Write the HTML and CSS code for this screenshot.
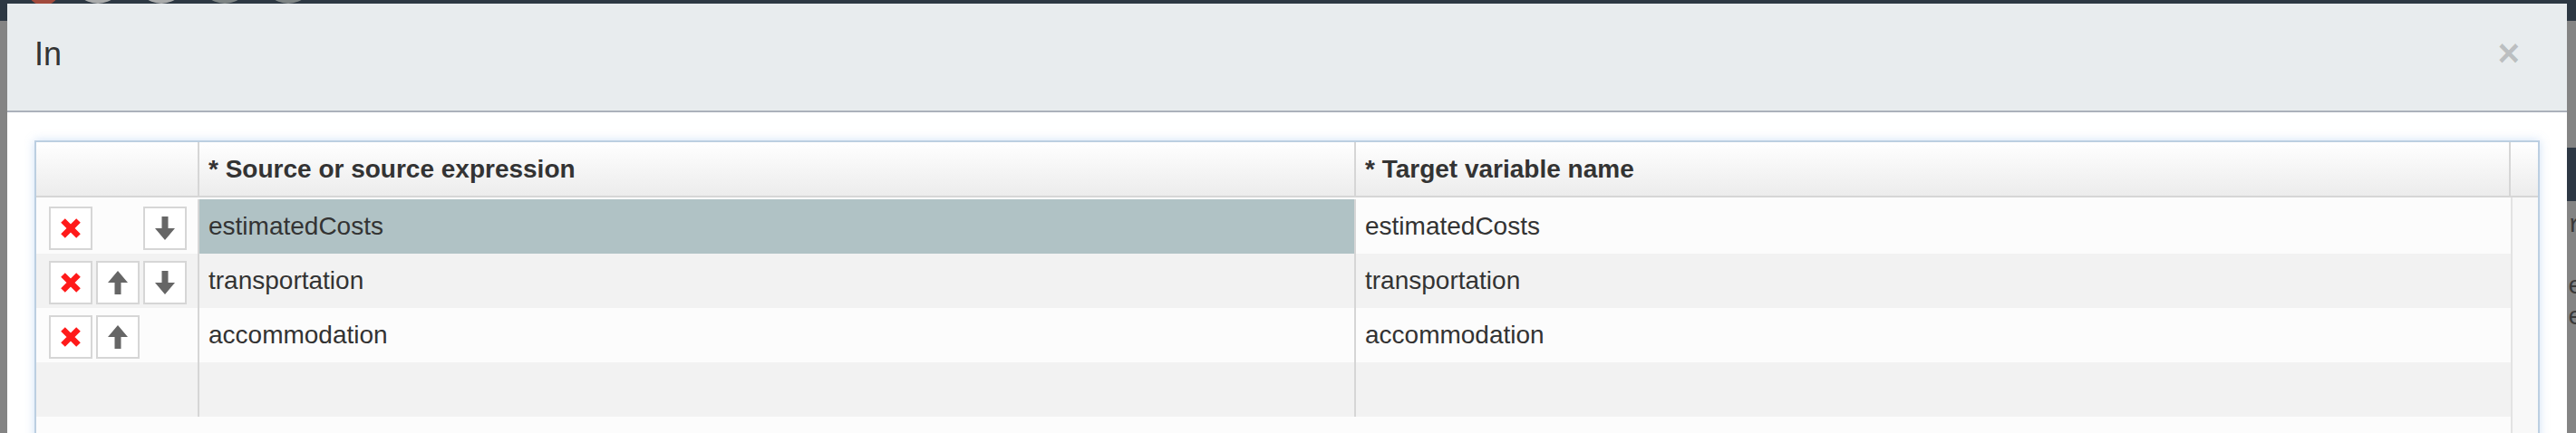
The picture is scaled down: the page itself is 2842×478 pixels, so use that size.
FILE: index.html
```html
<!DOCTYPE html>
<html lang="en">
<head>
  <meta charset="UTF-8" />
  <title>In – data mapping</title>
  <link rel="stylesheet" href="styles.css">
</head>
<body>
<!-- page behind the dialog -->
<div class="page">
  <div class="navbar">
    <span class="nav-logo"></span>
    <span class="nav-dot"></span>
    <span class="nav-dot"></span>
    <span class="nav-dot dark"></span>
    <span class="nav-dot dark"></span>
  </div>
  <div class="side-bar"></div>
  <div class="side-text">r<br><br>e<br>e</div>
</div>

<!-- dialog -->
<div class="modal">
  <div class="modal-header">
    <h3 class="modal-title">In</h3>
    <button class="close">×</button>
  </div>
  <div class="modal-body">
    <div class="grid">
      <div class="grid-head">
        <div class="cell col-actions"></div>
        <div class="cell col-source">* Source or source expression</div>
        <div class="cell col-target">* Target variable name</div>
        <div class="cell col-scroll"></div>
      </div>
      <div class="grid-body">
        <div class="rows">
          <div class="row">
            <div class="cell col-actions">
              <button class="btn-icon"><svg class="ic-del" viewBox="0 0 22 22"><path d="M2.5 2.5 19.5 19.5M19.5 2.5 2.5 19.5"/></svg></button>
              <span class="btn-slot"></span>
              <button class="btn-icon"><svg class="ic-arrow" viewBox="0 0 22 26"><path d="M7.5 0h7v13h7.5L11 26 0 13h7.5z"/></svg></button>
            </div>
            <div class="cell col-source selected">estimatedCosts</div>
            <div class="cell col-target">estimatedCosts</div>
          </div>
          <div class="row">
            <div class="cell col-actions">
              <button class="btn-icon"><svg class="ic-del" viewBox="0 0 22 22"><path d="M2.5 2.5 19.5 19.5M19.5 2.5 2.5 19.5"/></svg></button>
              <button class="btn-icon"><svg class="ic-arrow" viewBox="0 0 22 26"><path d="M7.5 26h7V13h7.5L11 0 0 13h7.5z"/></svg></button>
              <button class="btn-icon"><svg class="ic-arrow" viewBox="0 0 22 26"><path d="M7.5 0h7v13h7.5L11 26 0 13h7.5z"/></svg></button>
            </div>
            <div class="cell col-source">transportation</div>
            <div class="cell col-target">transportation</div>
          </div>
          <div class="row">
            <div class="cell col-actions">
              <button class="btn-icon"><svg class="ic-del" viewBox="0 0 22 22"><path d="M2.5 2.5 19.5 19.5M19.5 2.5 2.5 19.5"/></svg></button>
              <button class="btn-icon"><svg class="ic-arrow" viewBox="0 0 22 26"><path d="M7.5 26h7V13h7.5L11 0 0 13h7.5z"/></svg></button>
            </div>
            <div class="cell col-source">accommodation</div>
            <div class="cell col-target">accommodation</div>
          </div>
          <div class="row">
            <div class="cell col-actions"></div>
            <div class="cell col-source"></div>
            <div class="cell col-target"></div>
          </div>
        </div>
        <div class="scroll-track"></div>
      </div>
    </div>
  </div>
</div>
</body>
</html>
```

FILE: styles.css
```css
*{box-sizing:border-box}
html,body{height:100%}
body{margin:0;background:#848484;font-family:"Liberation Sans",Arial,Helvetica,sans-serif;color:#333;overflow:hidden}

/* page behind the backdrop */
.page{position:relative;height:100%}
.navbar{height:23px;background:#2d3843;display:flex;align-items:flex-start;gap:14px;padding-left:30px}
.nav-logo{width:36px;height:36px;border-radius:50%;background:#a14a3c;margin-top:-30px}
.nav-dot{width:56px;height:56px;border-radius:50%;background:#a9abab;margin-top:-52px}
.nav-dot.dark{background:#7d8484}
.side-bar{position:absolute;top:163px;right:0;width:12px;height:59px;background:#2e3844}
.side-text{position:absolute;top:232px;left:2833px;font:28px/34px "Liberation Mono",monospace;color:#3a3a3a}

/* dialog */
.modal{position:absolute;top:4px;left:8px;right:10px;bottom:0;background:#fff}
.modal-header{display:flex;justify-content:space-between;align-items:flex-start;height:120px;padding:36px 30px 0 30px;background:#e8ecee;border-bottom:2px solid #abb1bb}
.modal-title{margin:0;font-size:36px;line-height:40px;font-weight:normal;color:#333}
.close{margin:-2px 22px 0 0;padding:0;border:0;background:none;font:bold 42px/1 "Liberation Sans",Arial,sans-serif;color:rgba(0,0,0,.2);cursor:pointer}
.modal-body{padding:31px 30px 0 30px}

/* mapping grid */
.grid{border:2px solid #bccfe1;box-shadow:0 0 10px rgba(120,170,230,.35);height:420px}
.grid-head{display:flex;height:61px;background:linear-gradient(#fff,#ececec);border-bottom:2px solid #d6d6d6}
.grid-head .cell{font-weight:bold}
.cell{display:flex;align-items:center;padding-left:10px;font-size:28px;border-right:2px solid #d6d6d6;white-space:nowrap}
.col-actions{width:180px;padding-left:14px;gap:4px}
.col-source{width:1276px}
.col-target{width:1274px}
.col-scroll{flex:1;border-right:0}

.grid-body{display:flex;height:260px}
.rows{width:2730px;padding-top:2px;background:#fcfcfc}
.row{display:flex;height:60px;background:#fcfcfc}
.row:nth-child(even){background:#f2f2f2}
.row .col-actions{padding-top:4px}
.row .col-target{border-right:0}
.selected{background:#b0c2c5}
.scroll-track{flex:1;background:#f8f8f8;border-left:2px solid #e3e3e3}

.btn-icon{width:48px;height:48px;padding:0;border:2px solid #d6d6d6;background:#fff;display:flex;align-items:center;justify-content:center;cursor:pointer}
.btn-slot{width:48px;height:48px}
.ic-del{width:22px;height:22px;fill:none;stroke:#ff1a1a;stroke-width:6.5}
.ic-arrow{width:22px;height:26px;fill:#666}
```
